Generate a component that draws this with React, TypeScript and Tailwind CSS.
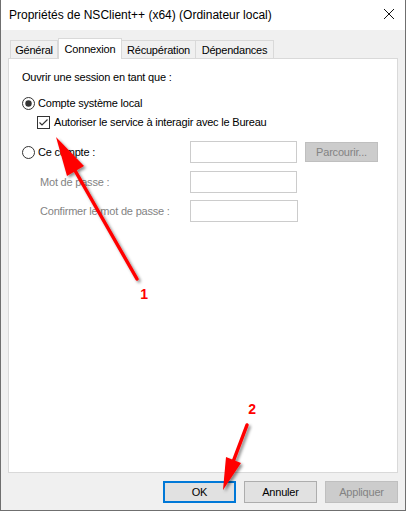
import React from "react";

const font = { fontFamily: '"Liberation Sans", Arial, sans-serif' };

function Radio({ checked }: { checked?: boolean }) {
  return (
    <svg width="13" height="13" viewBox="0 0 13 13" className="shrink-0">
      <circle cx="6.5" cy="6.5" r="6" fill="white" stroke="#333" strokeWidth="1" />
      {checked && <circle cx="6.5" cy="6.5" r="3.2" fill="#333" />}
    </svg>
  );
}

function Check() {
  return (
    <svg width="13" height="13" viewBox="0 0 13 13" className="shrink-0">
      <rect x="0.5" y="0.5" width="12" height="12" fill="white" stroke="#333" />
      <path d="M2.5 6.5 L5 9 L10.5 3.5" fill="none" stroke="#333" strokeWidth="1.2" />
    </svg>
  );
}

export default function App() {
  return (
    <div
      className="relative w-[406px] h-[511px] bg-[#f0f0f0] border-l border-r border-b border-[#6f6f6f] flex flex-col text-[11px] tracking-[-0.2px] text-black overflow-hidden"
      style={font}
    >
      {/* Title bar */}
      <div className="h-[30px] bg-white flex items-center justify-between pl-[8px] pr-[10px] shrink-0">
        <span className="text-[12px] leading-[16px] tracking-normal">Propriétés de NSClient++ (x64) (Ordinateur local)</span>
        <svg width="12" height="12" viewBox="0 0 12 12" className="mb-[2px]">
          <path d="M1 1 L11 11 M11 1 L1 11" stroke="#111" strokeWidth="1" />
        </svg>
      </div>

      {/* Tabs */}
      <div className="mt-[8px] ml-[8px] flex items-end h-[20px] shrink-0 relative z-10">
        <div className="w-[48px] h-[18px] ml-[1px] border border-b-0 border-[#d9d9d9] bg-[#f0f0f0] flex items-center justify-center leading-[16px]">
          Général
        </div>
        <div className="w-[64px] h-[21px] border border-b-0 border-[#d9d9d9] bg-white flex items-start justify-center pt-[2px] leading-[16px] -mb-[1px]">
          Connexion
        </div>
        <div className="w-[74px] h-[18px] border border-l-0 border-b-0 border-[#d9d9d9] bg-[#f0f0f0] flex items-center justify-center leading-[16px]">
          Récupération
        </div>
        <div className="w-[78px] h-[18px] border border-l-0 border-b-0 border-[#d9d9d9] bg-[#f0f0f0] flex items-center justify-center leading-[16px]">
          Dépendances
        </div>
      </div>

      {/* Panel */}
      <div className="ml-[7px] w-[390px] h-[415px] bg-white border border-[#d9d9d9] shrink-0 pt-[10px]">
        <div className="pl-[13px] h-[16px] leading-[16px]">Ouvrir une session en tant que :</div>

        <div className="mt-[10px] pl-[13px] h-[16px] flex items-center gap-[3px] leading-[16px]">
          <Radio checked />
          <span>Compte système local</span>
        </div>

        <div className="mt-[3px] pl-[28px] h-[16px] flex items-center gap-[4px] leading-[16px]">
          <Check />
          <span>Autoriser le service à interagir avec le Bureau</span>
        </div>

        <div className="mt-[11px] h-[22px] flex items-center">
          <div className="w-[181px] pl-[13px] flex items-center gap-[3px]">
            <Radio />
            <span>Ce compte :</span>
          </div>
          <div className="w-[107px] h-[22px] border border-[#cccccc] bg-white" />
          <div className="ml-[8px] w-[73px] h-[20px] border border-[#bfbfbf] bg-[#cccccc] text-[#838383] flex items-center justify-center leading-[16px]">
            Parcourir...
          </div>
        </div>

        <div className="mt-[8px] h-[22px] flex items-center">
          <div className="w-[181px] pl-[31px] text-[#838383]">Mot de passe :</div>
          <div className="w-[107px] h-[22px] border border-[#cccccc] bg-white" />
        </div>

        <div className="mt-[7px] h-[22px] flex items-center">
          <div className="w-[181px] pl-[31px] text-[#838383]">Confirmer le mot de passe :</div>
          <div className="w-[108px] h-[22px] border border-[#cccccc] bg-white" />
        </div>
      </div>

      {/* Buttons */}
      <div className="mt-[8px] flex justify-end gap-[8px] pr-[7px]">
        <div className="w-[73px] h-[22px] border-2 border-[#0078d7] bg-[#e1e1e1] flex items-center justify-center leading-[16px]">
          OK
        </div>
        <div className="w-[73px] h-[22px] border border-[#adadad] bg-[#e1e1e1] flex items-center justify-center leading-[16px]">
          Annuler
        </div>
        <div className="w-[73px] h-[22px] border border-[#bfbfbf] bg-[#cccccc] text-[#838383] flex items-center justify-center leading-[16px]">
          Appliquer
        </div>
      </div>

      {/* Annotation arrows */}
      <svg
        className="absolute left-0 top-0 pointer-events-none z-20"
        width="406"
        height="511"
        viewBox="0 0 406 511"
      >
        <defs>
          <filter id="sh" x="-20%" y="-20%" width="140%" height="140%">
            <feDropShadow dx="2" dy="2" stdDeviation="1.5" floodColor="#000" floodOpacity="0.45" />
          </filter>
        </defs>
        <g filter="url(#sh)" fill="#ff0000" stroke="none">
          <path d="M136 279 L72 167" stroke="#ff0000" strokeWidth="3.5" strokeLinecap="round" />
          <polygon points="55,137 83,166 66,176" />
          <path d="M246 425 L232 462" stroke="#ff0000" strokeWidth="3.5" strokeLinecap="round" />
          <polygon points="222,490 240,463 225,457" />
        </g>
        <text x="143" y="299" fill="#ff0000" fontSize="14" fontWeight="bold" textAnchor="middle" style={font}>
          1
        </text>
        <text x="251" y="414" fill="#ff0000" fontSize="14" fontWeight="bold" textAnchor="middle" style={font}>
          2
        </text>
      </svg>
    </div>
  );
}
